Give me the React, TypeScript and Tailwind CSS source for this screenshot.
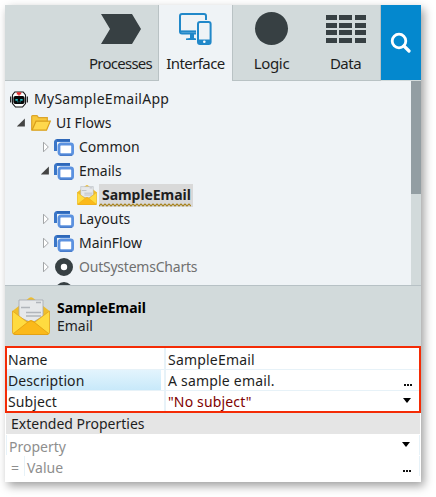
import React from "react";

function FlowIcon() {
  return (
    <svg width="20" height="17" viewBox="0 0 20 17" className="shrink-0">
      <path d="M1.5 12V3A1.5 1.5 0 0 1 3 1.5H16" fill="none" stroke="#3a76c8" strokeWidth="3" />
      <path d="M3 1H16" stroke="#2a62b2" strokeWidth="1.4" />
      <rect x="5" y="5" width="13.6" height="10.6" rx="2" fill="#fff" stroke="#5c92e0" strokeWidth="2.8" />
      <path d="M6 16.2H18" stroke="#3f72c0" strokeWidth="1" />
    </svg>
  );
}

function FolderIcon() {
  return (
    <svg width="20" height="16" viewBox="0 0 20 16" className="shrink-0">
      <path d="M.7 15V1.5Q.7.7 1.5.7H6l1.5 2H16.3V8" fill="#f8c93c" stroke="#dca52a" strokeWidth="1.2" />
      <path d="M1 15.2L5 6.2H19.3L15.5 15.2Z" fill="#ffd84c" stroke="#d99f1b" strokeWidth="1.2" />
    </svg>
  );
}

function MailIcon({ size }: { size: number }) {
  return (
    <svg width={size} height={size} viewBox="0 0 38 38" className="shrink-0">
      <path d="M.5 14L17 1Q19-.6 21 1L37.5 14V35Q37.5 37.5 35 37.5H3Q.5 37.5.5 35Z" fill="#efbd2c" />
      <path d="M7 3H31V19L20 26L7 20Z" fill="#e6e8ea" stroke="#a2a7ae" strokeWidth=".8" />
      <path d="M9 10.5H18M24 5.5H29M14 15.5H29M14 19H29" stroke="#b1b5bb" strokeWidth="1.4" />
      <path d="M.5 14L15 25Q19 22 23 25L37.5 14V35Q37.5 37.5 35 37.5H3Q.5 37.5.5 35Z" fill="#ffdb40" stroke="#e3a51e" strokeWidth=".8" />
      <path d="M1.5 36.5L16 25Q19 22.5 22 25L36.5 36.5Q36 37.5 35 37.5H3Z" fill="#fbb91a" stroke="#e09d10" strokeWidth=".8" />
    </svg>
  );
}

function RobotIcon() {
  return (
    <svg width="18" height="17" viewBox="0 0 18 17" className="shrink-0">
      <path d="M4.8 1H13.2L15.5 4V12.5L12.5 16H5.5L2.5 12.5V4Z" fill="#fff" stroke="#161616" strokeWidth="1.1" />
      <path d="M.7 5.5V11.5M17.3 5.5V11.5" stroke="#161616" strokeWidth="1.2" />
      <path d="M6.8 1.2H11.2V3.6H9.8V4.6H8.2V3.6H6.8Z" fill="#e42c2c" />
      <rect x="3.4" y="5" width="11.2" height="8" rx="2" fill="#080808" />
      <path d="M5.4 8.8H7.8M10.2 8.8H12.6" stroke="#25c4cc" strokeWidth="1.8" />
      <path d="M7.2 10.8H10.8" stroke="#25c4cc" strokeWidth=".8" strokeDasharray=".8 .6" />
    </svg>
  );
}

function GearDisc() {
  return (
    <svg width="18" height="18" viewBox="0 0 18 18" className="shrink-0">
      <circle cx="9" cy="9" r="6.1" fill="#fff" stroke="#374043" strokeWidth="5.8" />
    </svg>
  );
}

function Caret({ open }: { open?: boolean }) {
  return (
    <svg width="8" height="12" viewBox="0 0 8 12" className="shrink-0">
      {open ? (
        <path d="M7.9 1.4V9.4H-.1Z" fill="#444" />
      ) : (
        <path d="M2.5 1.2L7.3 6L2.5 10.8Z" fill="#fff" stroke="#a3a6a8" />
      )}
    </svg>
  );
}

function DownArrow() {
  return (
    <svg width="8" height="5" viewBox="0 0 8 5" className="shrink-0">
      <path d="M0 0H8L4 5Z" fill="#000" />
    </svg>
  );
}

function Dots() {
  return (
    <svg width="8" height="2" viewBox="0 0 8 2" className="mt-2.5 shrink-0">
      <path d="M0 0h2v2H0zM3 0h2v2h-2zM6 0h2v2H6z" fill="#111" />
    </svg>
  );
}

function Branch({ label, open }: { label: string; open?: boolean }) {
  return (
    <div className="flex h-6 shrink-0 items-center pl-[36px]">
      <Caret open={open} />
      <span className="ml-[5px] flex">
        <FlowIcon />
      </span>
      <span className="ml-[5px]">{label}</span>
    </div>
  );
}

export default function App() {
  return (
    <div className="h-[497px] w-[436px] overflow-hidden bg-white p-[5px] font-['Noto_Sans','Open_Sans',sans-serif] text-[14px] leading-5 whitespace-nowrap text-[#1e1e1e]">
      <div className="flex h-[477px] w-[416px] flex-col bg-white shadow-[3px_4px_9px_rgba(0,0,0,0.38)]">
        <div className="flex h-[76px] shrink-0 bg-[#d2dadb]">
          <div className="flex w-[154px] flex-col items-end border-r border-b border-[#b9c2c4] pr-[6px]">
            <svg width="40" height="30" viewBox="0 0 40 30" className="mt-[9px] mr-[11px] shrink-0">
              <path d="M0 0H31L40 15L31 30H0L9 15Z" fill="#374043" />
            </svg>
            <span className="mt-[9px] text-[15px] tracking-[-0.75px]">Processes</span>
          </div>
          <div className="flex w-[73px] flex-col items-center bg-[#eff3f6]">
            <svg width="34" height="33" viewBox="0 0 34 33" className="mt-[7px] ml-[-2px] shrink-0">
              <g fill="none" stroke="#2188c9" strokeWidth="2">
                <path d="M18 21.5H4Q2 21.5 2 19.5V4Q2 2 4 2H26Q28 2 28 4V8" />
                <path d="M2 19.5H18" strokeWidth="2.2" />
                <rect x="20" y="10" width="12.6" height="22" rx="2" fill="#eff3f6" />
              </g>
              <path d="M12 22H16V26L18 26.5V28H8V26.5L12 26ZM20 27.5H32.6V32H20Z" fill="#2188c9" />
              <circle cx="26.3" cy="29.8" r="1.3" fill="#fff" />
            </svg>
            <span className="mt-[8px] text-[15px] tracking-[-0.6px]">Interface</span>
          </div>
          <div className="flex w-[149px] border-x border-b border-[#b9c2c4]">
            <div className="flex w-[77px] flex-col items-center">
              <div className="mt-[7px] size-[33px] shrink-0 rounded-full bg-[#374043]" />
              <span className="mt-[8px] text-[15px] tracking-[-0.35px]">Logic</span>
            </div>
            <div className="flex flex-1 flex-col items-center pl-[1px]">
              <div className="mt-[10px] grid h-7 w-10 shrink-0 grid-cols-[11px_13px_11px] grid-rows-[5px_5px_5px_5px] justify-between gap-y-[2.6px]">
                {Array.from({ length: 12 }, (_, i) => (
                  <i key={i} className="bg-[#374043]" />
                ))}
              </div>
              <span className="mt-[10px] text-[15px] tracking-[-0.5px]">Data</span>
            </div>
          </div>
          <div className="flex h-[75px] w-10 items-center justify-center bg-[#0488ce]">
            <svg width="21" height="21" viewBox="0 0 21 21" className="mr-[2px]">
              <circle cx="9" cy="9" r="6.8" fill="none" stroke="#fff" strokeWidth="2.8" />
              <path d="M14 14L19 19" stroke="#fff" strokeWidth="3.2" strokeLinecap="round" />
            </svg>
          </div>
        </div>

        <div className="flex h-[205px] shrink-0 border-b border-[#b7c1c5] bg-[#eff3f6]">
          <div className="flex flex-1 flex-col overflow-hidden pt-[6px]">
            <div className="flex h-6 shrink-0 items-center pl-[5px]">
              <RobotIcon />
              <span className="ml-[6px] tracking-[0.28px]">MySampleEmailApp</span>
            </div>
            <div className="flex h-6 shrink-0 items-center pl-[12px]">
              <Caret open />
              <span className="ml-[6px] flex">
                <FolderIcon />
              </span>
              <span className="ml-[5px]">UI Flows</span>
            </div>
            <Branch label="Common" />
            <Branch label="Emails" open />
            <div className="flex h-6 shrink-0 items-center pl-[72px]">
              <MailIcon size={20} />
              <span className="relative ml-[2px] h-[23px] w-[94px] bg-[#d9d9d9] pl-[3px] leading-[22px] font-bold tracking-[-0.05px]">
                SampleEmail
                <svg width="92" height="4" viewBox="0 0 92 4" className="absolute bottom-0 left-0">
                  <path
                    d={"M0 3" + Array.from({ length: 23 }, (_, i) => `L${i * 4 + 2} 1L${i * 4 + 4} 3`).join("")}
                    fill="none"
                    stroke="#a7831f"
                    strokeWidth="1.2"
                  />
                </svg>
              </span>
            </div>
            <Branch label="Layouts" />
            <Branch label="MainFlow" />
            <div className="flex h-6 shrink-0 items-center pl-[36px] text-[#707070]">
              <Caret />
              <span className="ml-[6px] flex">
                <GearDisc />
              </span>
              <span className="ml-[6px] tracking-[-0.22px]">OutSystemsCharts</span>
            </div>
            <div className="flex h-6 shrink-0 items-center pl-[36px]">
              <Caret />
              <span className="ml-[6px] flex">
                <GearDisc />
              </span>
            </div>
          </div>
          <div className="w-[10px] bg-[#d2dadb]">
            <div className="h-[113px] bg-[#939ea3]" />
          </div>
        </div>

        <div className="flex h-[60px] shrink-0 items-center bg-[#d2dadb] pl-[7px]">
          <MailIcon size={38} />
          <div className="mt-[2px] ml-[7px] leading-[18px]">
            <div className="font-bold tracking-[-0.05px] text-black">SampleEmail</div>
            <div>Email</div>
          </div>
        </div>

        <div className="h-[67px] shrink-0 border-2 border-[#f42b05] bg-white">
          <div className="flex h-[22px] border-b border-[#e7f2f8]">
            <div className="w-[159px] border-r-2 border-[#e7f2f8] pl-[1px] leading-[23px]">Name</div>
            <div className="pl-[2px] leading-[23px] tracking-[0.2px]">SampleEmail</div>
          </div>
          <div className="flex h-[21px] border-b border-[#e7f2f8]">
            <div className="flex w-[159px] border-r-2 border-[#e7f2f8] pr-[3px]">
              <div className="flex-1 bg-linear-to-b from-[#e3f4fd] to-[#c8e9fa] pl-[1px] leading-[21px] tracking-[0.1px]">Description</div>
            </div>
            <div className="flex flex-1 items-center justify-between pr-[7px] pl-[2px] tracking-[0.2px]">
              <span className="mt-[1px]">A sample email.</span>
              <Dots />
            </div>
          </div>
          <div className="flex h-[20px]">
            <div className="w-[159px] border-r-2 border-[#e7f2f8] pl-[1px] leading-[21px] tracking-[0.1px]">Subject</div>
            <div className="flex flex-1 items-center justify-between pr-[8px] pl-[2px] tracking-[0.15px] text-[#800000]">
              <span className="mt-[1px]">"No subject"</span>
              <span className="flex pb-[1px]">
                <DownArrow />
              </span>
            </div>
          </div>
        </div>

        <div className="mx-[1px] h-[21px] shrink-0 bg-[#e5e5e5] pl-[5px] leading-[22px]">Extended Properties</div>
        <div className="mx-[1px] mt-[1px] flex h-5 shrink-0 items-center justify-between border-x border-[#e7f2f8] pr-[9px] pl-[2px] text-[#8e8e8e]">
          <span className="mt-[3px]">Property</span>
          <span className="flex pb-[1px]">
            <DownArrow />
          </span>
        </div>
        <div className="mx-[1px] mt-[1px] flex h-5 shrink-0 items-center border-r border-[#e7f2f8] pr-[8px] text-[#8e8e8e]">
          <span className="mr-[2px] h-full w-[19px] border-r border-[#e7f2f8] pl-[5px] leading-[23px]">=</span>
          <span className="mt-[3px] flex-1">Value</span>
          <Dots />
        </div>
      </div>
    </div>
  );
}
